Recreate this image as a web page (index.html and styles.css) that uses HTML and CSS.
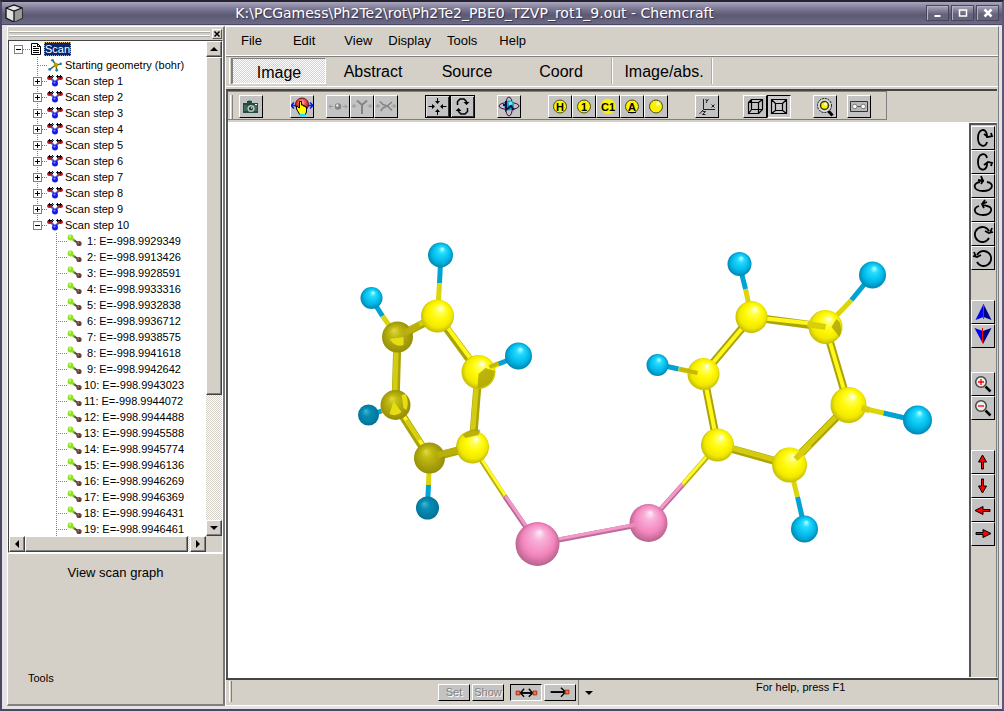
FILE: index.html
```html
<!DOCTYPE html>
<html lang="en">
<head>
<meta charset="utf-8">
<title>Chemcraft</title>
<link rel="stylesheet" href="styles.css">
</head>
<body>
<svg class="defs" aria-hidden="true">
  <defs>
    <radialGradient id="yellow" cx=".5" cy=".5" r=".55" fx=".62" fy=".24"><stop offset="0" stop-color="#fff"/><stop offset=".22" stop-color="#ffff50"/><stop offset=".5" stop-color="#fff800"/><stop offset=".75" stop-color="#f1e900"/><stop offset="1" stop-color="#b5ad05"/></radialGradient>
    <radialGradient id="olive" cx=".5" cy=".5" r=".55" fx=".38" fy=".28"><stop offset="0" stop-color="#dedb42"/><stop offset=".3" stop-color="#c1bb10"/><stop offset="1" stop-color="#918907"/></radialGradient>
    <radialGradient id="cyan" cx=".5" cy=".5" r=".55" fx=".58" fy=".24"><stop offset="0" stop-color="#c0ffff"/><stop offset=".25" stop-color="#22dcff"/><stop offset=".65" stop-color="#00b9e9"/><stop offset="1" stop-color="#007ba5"/></radialGradient>
    <radialGradient id="teal" cx=".5" cy=".5" r=".55" fx=".36" fy=".3"><stop offset="0" stop-color="#48b6d4"/><stop offset=".35" stop-color="#078eb6"/><stop offset="1" stop-color="#006f96"/></radialGradient>
    <radialGradient id="pink" cx=".5" cy=".5" r=".55" fx=".55" fy=".22"><stop offset="0" stop-color="#fff0f8"/><stop offset=".25" stop-color="#f7b2da"/><stop offset=".65" stop-color="#f486bd"/><stop offset="1" stop-color="#a95c82"/></radialGradient>
    <radialGradient id="redball" cx=".5" cy=".35" r=".65"><stop offset="0" stop-color="#ffb0b0"/><stop offset=".5" stop-color="#ec4040"/><stop offset="1" stop-color="#9a1010"/></radialGradient>
  </defs>
  <symbol id="i-cube" viewBox="0 0 18 18"><path d="M1 4 9 1l8 3v10l-8 4-8-4z" fill="#e4e2e2" stroke="#111" stroke-width="1.3"/><path d="m9 7 8-3v10l-8 4z" fill="#9a9a9a"/><path d="M1 4 9 7l8-3M9 7v11" fill="none" stroke="#111" stroke-width="1.3"/></symbol>
  <symbol id="i-page" viewBox="0 0 12 12"><path d="M1.500 .5h6l3 3v8h-9z" fill="#fff" stroke="#000"/><path d="M7.500 .5v3h3M3 5.500h6M3 7.500h6M3 9.500h6M3 3.500h3" fill="none" stroke="#000"/></symbol>
  <symbol id="i-geo" viewBox="0 0 16 16"><path d="M5 2l4 6 6-1M9 8l-7 5M9 8l1 6" fill="none" stroke="#60600c" stroke-width="1.600"/><circle cx="9" cy="8" r="2.500" fill="#b59b08"/><g fill="#1684c2"><circle cx="5" cy="2.500" r="1.500"/><circle cx="14.500" cy="6.500" r="1.500"/><circle cx="2" cy="13" r="1.700"/><circle cx="10" cy="14" r="1.600"/></g></symbol>
  <symbol id="i-step" viewBox="0 0 16 14"><path d="m3 3 5 6 5-6" fill="none" stroke="#5053c0" stroke-width="2"/><ellipse cx="2.500" cy="4" rx="2.500" ry="2" fill="#c00c10"/><ellipse cx="13.500" cy="4" rx="2.500" ry="2" fill="#c00c10"/><circle cx="8" cy="9.500" r="3" fill="#1717ee"/><circle cx="7.500" cy="8.500" r="1" fill="#8d90ff"/><path d="M1.500 2.500h4m4 0h5M3 1 1.500 2.500 3 4M5 1l1.500 1.500L5 4m6-3L9.500 2.500 11 4m2-3 1.500 1.500L13 4" fill="none" stroke="#000"/></symbol>
  <symbol id="i-bond" viewBox="0 0 16 14"><path d="m4 4 4 3" stroke="#76cc11" stroke-width="2.500"/><path d="m7.500 6.500 4 3" stroke="#664238" stroke-width="2"/><circle cx="3.500" cy="3.500" r="2.900" fill="#8fe31d"/><circle cx="3" cy="2.500" r="1" fill="#d6ff7e"/><circle cx="12" cy="9.500" r="2.600" fill="#684036"/><circle cx="11.300" cy="8.700" r=".8" fill="#ab8078"/></symbol>
  <symbol id="i-camera" viewBox="0 0 22 21"><path d="M3 7h4V5h5v2h6v10H3z" fill="#244b3d"/><path d="M4 9h3v6H4zm9 0h4v6h-4z" fill="#406a58"/><path d="M8 4.500h3" stroke="#789a90"/><circle cx="11" cy="12.500" r="3.600" fill="#b8c8c0"/><circle cx="11" cy="12.500" r="2" fill="#153024"/><circle cx="11.500" cy="12" r=".8" fill="#fff"/><path d="M15 8h2v1h-2z" fill="#fff"/></symbol>
  <symbol id="i-hand" viewBox="0 0 22 21"><circle cx="11" cy="8.500" r="6.500" fill="url(#redball)" stroke="#601414"/><path d="M0 9.500h5m12 0h5M3 6.500l-3 3 3 3m16-6 3 3-3 3" stroke="#0018f0" stroke-width="1.500" fill="none"/><path d="m5.500 10 3 2V5.500h2V9h1.700v1H14v1h1.500v5l-1.500 3H9l-3.500-6z" fill="#ff0" stroke="#000"/><path d="M8.500 18h6v2.500h-6z" fill="#19dfff"/></symbol>
  <symbol id="i-gray1" viewBox="0 0 22 21"><circle cx="11" cy="10.500" r="3.200" fill="#858585"/><circle cx="10.300" cy="9.500" r="1.200" fill="#eee"/><path d="M2 10.500h4m10 0h4M4 8.500l-2 2 2 2m14-4 2 2-2 2" stroke="#98988f" fill="none"/></symbol>
  <symbol id="i-gray2" viewBox="0 0 22 21"><path d="M6 4.500 11 9l5-4.500M11 9v9" stroke="#858585" stroke-width="2" fill="none"/><path d="M1.500 10h4m11 0h4M3.500 8l-2 2 2 2m15-4 2 2-2 2" stroke="#98988f" fill="none"/></symbol>
  <symbol id="i-gray3" viewBox="0 0 22 21"><path d="m5 5.500 3 3 5 2 4 4M17 6l-5 4-4 2-2.500 3" stroke="#858585" stroke-width="1.600" fill="none"/><path d="M1.500 10h4m11 0h4M3.500 8l-2 2 2 2m15-4 2 2-2 2" stroke="#98988f" fill="none"/></symbol>
  <symbol id="i-center" viewBox="0 0 22 21"><path d="M11 2v5m0 7v5M2 10.500h5m8 0h5" stroke="#000"/><path d="M8.500 5h5L11 8zM8.500 16h5L11 13zM5.500 8v5l3-2.500zM16.500 8v5l-3-2.500z"/></symbol>
  <symbol id="i-spin" viewBox="0 0 22 21"><path d="M6 9V5.500L8.500 3h4L15 5.500V7M16 12v3.500L13.500 18h-4L7 15.500V14" fill="none" stroke="#000" stroke-width="1.500"/><path d="M12 6h6l-3 3zM4 15h6l-3-3z"/></symbol>
  <symbol id="i-orbit" viewBox="0 0 22 21"><g fill="none" stroke="#3d0a42"><ellipse cx="11" cy="10" rx="10" ry="3.500"/><ellipse cx="11" cy="10.500" rx="3.500" ry="9.500"/></g><circle cx="11" cy="9.500" r="5" fill="#02a9c2"/><circle cx="12.500" cy="7.500" r="2" fill="#61efff"/><path d="M8 5v9l5-4 3 4M5 9h4" fill="none" stroke="#15104a" stroke-width="2"/></symbol>
  <symbol id="i-ball" viewBox="0 0 22 21"><circle cx="11" cy="10.500" r="6.500" fill="#fff200" stroke="#4b4b14"/></symbol>
  <symbol id="i-shine" viewBox="0 0 22 21"><circle cx="11" cy="10.500" r="6.500" fill="#fff200" stroke="#4b4b14"/><circle cx="13" cy="8" r="2" fill="#ffffbc"/></symbol>
  <symbol id="i-plain" viewBox="0 0 22 21"><circle cx="11" cy="10.500" r="7.500" fill="#fff200" stroke="#e1db78" stroke-dasharray="2 1"/></symbol>
  <symbol id="i-axes" viewBox="0 0 22 21"><path d="M7.500 3v10.500H19M7.500 13.500l-4 4.500M9.500 3l1.500 2 1.500-2M11 5l-1 2M15.500 8.500l3 3m0-3-3 3M6.500 15.500h3l-3 3h3" fill="none" stroke="#222"/></symbol>
  <symbol id="i-box" viewBox="0 0 22 21"><path d="M4.500 6.500h10v11h-10zM7.500 3.500h11v10h-11zM4.500 6.500l3-3m7 3 4-3m-4 14 4-4m-14 4 3-4" fill="none" stroke="#000" stroke-width="1.200"/></symbol>
  <symbol id="i-box2" viewBox="0 0 22 21"><path d="M3.500 3.500h15v14h-15zM7.500 7.500h7v7h-7zM3.500 3.500l4 4m11-4-4 4m4 10-4-3m-11 3 4-3" fill="none" stroke="#000" stroke-width="1.200"/></symbol>
  <symbol id="i-magball" viewBox="0 0 22 21"><path d="m13.500 14 5 5.500" stroke="#000" stroke-width="3"/><circle cx="10.500" cy="9.500" r="7" fill="#ddd" stroke="#000" stroke-dasharray="2 1"/><circle cx="10.500" cy="9.500" r="4" fill="#fff000" stroke="#3c3c00" stroke-width="1.500"/><circle cx="11.500" cy="8" r="1.400" fill="#fff"/></symbol>
  <symbol id="i-tape" viewBox="0 0 22 21"><path d="M2.500 5.500h17v10h-17z" fill="#b9b9b9" stroke="#333"/><path d="M8 10.500h6" stroke="#555"/><circle cx="6.800" cy="10.500" r="2.300" fill="#fff" stroke="#777"/><circle cx="15.200" cy="10.500" r="2.300" fill="#fff" stroke="#777"/></symbol>
  <symbol id="i-rx1" viewBox="0 0 22 22"><path d="M15 15c-1 6-9 5-9-4s8-11 9-3v3M12 7l4 3 4-1-1-3" fill="none" stroke="#000" stroke-width="1.800"/></symbol>
  <symbol id="i-rx2" viewBox="0 0 22 22"><path d="M15 7c-1-6-9-5-9 4s8 10 9 3v-3M12 14l4-3 4 1-1 3" fill="none" stroke="#000" stroke-width="1.800"/></symbol>
  <symbol id="i-ry1" viewBox="0 0 22 22"><path d="M8 7C0 8 1 16 11 16s12-8 4-9M6 5l6 1M9 1l2 5-2 3" fill="none" stroke="#000" stroke-width="1.800"/></symbol>
  <symbol id="i-ry2" viewBox="0 0 22 22"><path d="M7 7C0 9 2 16 11 16s11-8 4-9l-5-2M15 3l-5 2M13 1l-3 4 2 4" fill="none" stroke="#000" stroke-width="1.800"/></symbol>
  <symbol id="i-rz1" viewBox="0 0 22 22"><path d="M17 15a7.500 7.500 0 1 1 0-7M13 8l4 2 4-1M20 5l-2 5" fill="none" stroke="#000" stroke-width="1.800"/></symbol>
  <symbol id="i-rz2" viewBox="0 0 22 22"><path d="M5 15a7.500 7.500 0 1 0 0-7M9 8l-4 2-4-1M2 5l2 5" fill="none" stroke="#000" stroke-width="1.800"/></symbol>
  <symbol id="i-north" viewBox="0 0 22 22"><path d="m11.500 3-8 16 8-3z" fill="#0000f4"/><path d="m11.500 3 8 16-8-3z" fill="#00008c"/><path d="M11.500 3v15" stroke="#f00"/></symbol>
  <symbol id="i-south" viewBox="0 0 22 22"><path d="m2.500 3 8.500 3v13z" fill="#0000f4"/><path d="m19.500 3-8.500 3v13z" fill="#00008c"/><path d="M10.500 3v15" stroke="#f00"/></symbol>
  <symbol id="i-zin" viewBox="0 0 22 22"><path d="m11.500 11.500 2 2" stroke="#ee0" stroke-width="3"/><path d="m13.500 13.500 5 5" stroke="#000" stroke-width="2.500"/><circle cx="9" cy="9" r="5.300" fill="#eee" stroke="#444" stroke-width="1.500"/><path d="M6 9h6M9 6v6" stroke="red" stroke-width="1.300"/></symbol>
  <symbol id="i-zout" viewBox="0 0 22 22"><path d="m11.500 11.500 2 2" stroke="#ee0" stroke-width="3"/><path d="m13.500 13.500 5 5" stroke="#000" stroke-width="2.500"/><circle cx="9" cy="9" r="5.300" fill="#eee" stroke="#444" stroke-width="1.500"/><path d="M6 9h6" stroke="red" stroke-width="1.300"/></symbol>
  <symbol id="i-up" viewBox="0 0 22 22"><path d="m10.500 4 4 7h-3v7h-2v-7h-3z" fill="red" stroke="#000"/></symbol>
  <symbol id="i-down" viewBox="0 0 22 22"><path d="m10.500 18 4-7h-3V4h-2v7h-3z" fill="red" stroke="#000"/></symbol>
  <symbol id="i-left" viewBox="0 0 22 22"><path d="m3 11.500 8-4v3h7v2h-7v3z" fill="red" stroke="#000"/></symbol>
  <symbol id="i-right" viewBox="0 0 22 22"><path d="m19 10.500-8-4v3H4v2h7v3z" fill="red" stroke="#000"/></symbol>
  <symbol id="i-both" viewBox="0 0 30 16"><path d="M8 8.500h14" stroke="#000" stroke-width="2"/><path d="m13 4-4 4.500 4 4M18 4l4 4.500-4 4" fill="none" stroke="#000" stroke-width="1.500"/><path d="M4.500 6.500h4v4h-4zM22.500 6.500h4v4h-4z" fill="#ff7040" stroke="#a22c0b"/></symbol>
  <symbol id="i-next" viewBox="0 0 30 16"><path d="M5 7.500h15" stroke="#000" stroke-width="2"/><path d="m16 3 5 4.500-5 5" fill="none" stroke="#000" stroke-width="1.500"/><path d="M20.500 5.500h4v4h-4z" fill="#ff7040" stroke="#a22c0b"/></symbol>
</svg>

<div class="window">
  <header class="titlebar">
    <svg class="app-icon"><use href="#i-cube"/></svg>
    <h1>K:\PCGamess\Ph2Te2\rot\Ph2Te2_PBE0_TZVP_rot1_9.out - Chemcraft</h1>
    <div class="window-buttons">
      <button aria-label="Minimize"><svg viewBox="0 0 20 14"><path d="M7 10h6" stroke="#fff" stroke-width="2"/></svg></button>
      <button aria-label="Maximize"><svg viewBox="0 0 20 14"><path d="M7 4h7v6H7z" fill="none" stroke="#fff" stroke-width="1.500"/></svg></button>
      <button aria-label="Close"><svg viewBox="0 0 20 14"><path d="m7 3.500 7 7m0-7-7 7" stroke="#fff" stroke-width="2.500"/></svg></button>
    </div>
  </header>

  <div class="body">
    <aside class="sidebar">
      <div class="dock"><span class="dock-grip"></span><button class="dock-close" aria-label="Close panel"><svg viewBox="0 0 8 8"><path d="m1.500 1.500 5 5m0-5-5 5" stroke="#000" stroke-width="1.500"/></svg></button></div>
      <div class="tree-box">
        <div class="tree">
          <div class="row root"><button class="toggle minus" aria-label="Collapse"></button><i class="dots"></i><svg class="page"><use href="#i-page"/></svg><span class="selected">Scan</span></div>
          <ul class="steps">
            <li class="row start"><svg><use href="#i-geo"/></svg><span>Starting geometry (bohr)</span></li>
            <li class="row"><button class="toggle plus" aria-label="Expand"></button><i class="dots"></i><svg><use href="#i-step"/></svg><span>Scan step 1</span></li>
            <li class="row"><button class="toggle plus" aria-label="Expand"></button><i class="dots"></i><svg><use href="#i-step"/></svg><span>Scan step 2</span></li>
            <li class="row"><button class="toggle plus" aria-label="Expand"></button><i class="dots"></i><svg><use href="#i-step"/></svg><span>Scan step 3</span></li>
            <li class="row"><button class="toggle plus" aria-label="Expand"></button><i class="dots"></i><svg><use href="#i-step"/></svg><span>Scan step 4</span></li>
            <li class="row"><button class="toggle plus" aria-label="Expand"></button><i class="dots"></i><svg><use href="#i-step"/></svg><span>Scan step 5</span></li>
            <li class="row"><button class="toggle plus" aria-label="Expand"></button><i class="dots"></i><svg><use href="#i-step"/></svg><span>Scan step 6</span></li>
            <li class="row"><button class="toggle plus" aria-label="Expand"></button><i class="dots"></i><svg><use href="#i-step"/></svg><span>Scan step 7</span></li>
            <li class="row"><button class="toggle plus" aria-label="Expand"></button><i class="dots"></i><svg><use href="#i-step"/></svg><span>Scan step 8</span></li>
            <li class="row"><button class="toggle plus" aria-label="Expand"></button><i class="dots"></i><svg><use href="#i-step"/></svg><span>Scan step 9</span></li>
            <li class="row"><button class="toggle minus" aria-label="Collapse"></button><i class="dots"></i><svg><use href="#i-step"/></svg><span>Scan step 10</span></li>
          </ul>
          <ul class="energies">
            <li class="row"><i class="dots"></i><svg><use href="#i-bond"/></svg><span>&nbsp;1: E=-998.9929349</span></li>
            <li class="row"><i class="dots"></i><svg><use href="#i-bond"/></svg><span>&nbsp;2: E=-998.9913426</span></li>
            <li class="row"><i class="dots"></i><svg><use href="#i-bond"/></svg><span>&nbsp;3: E=-998.9928591</span></li>
            <li class="row"><i class="dots"></i><svg><use href="#i-bond"/></svg><span>&nbsp;4: E=-998.9933316</span></li>
            <li class="row"><i class="dots"></i><svg><use href="#i-bond"/></svg><span>&nbsp;5: E=-998.9932838</span></li>
            <li class="row"><i class="dots"></i><svg><use href="#i-bond"/></svg><span>&nbsp;6: E=-998.9936712</span></li>
            <li class="row"><i class="dots"></i><svg><use href="#i-bond"/></svg><span>&nbsp;7: E=-998.9938575</span></li>
            <li class="row"><i class="dots"></i><svg><use href="#i-bond"/></svg><span>&nbsp;8: E=-998.9941618</span></li>
            <li class="row"><i class="dots"></i><svg><use href="#i-bond"/></svg><span>&nbsp;9: E=-998.9942642</span></li>
            <li class="row"><i class="dots"></i><svg><use href="#i-bond"/></svg><span>10: E=-998.9943023</span></li>
            <li class="row"><i class="dots"></i><svg><use href="#i-bond"/></svg><span>11: E=-998.9944072</span></li>
            <li class="row"><i class="dots"></i><svg><use href="#i-bond"/></svg><span>12: E=-998.9944488</span></li>
            <li class="row"><i class="dots"></i><svg><use href="#i-bond"/></svg><span>13: E=-998.9945588</span></li>
            <li class="row"><i class="dots"></i><svg><use href="#i-bond"/></svg><span>14: E=-998.9945774</span></li>
            <li class="row"><i class="dots"></i><svg><use href="#i-bond"/></svg><span>15: E=-998.9946136</span></li>
            <li class="row"><i class="dots"></i><svg><use href="#i-bond"/></svg><span>16: E=-998.9946269</span></li>
            <li class="row"><i class="dots"></i><svg><use href="#i-bond"/></svg><span>17: E=-998.9946369</span></li>
            <li class="row"><i class="dots"></i><svg><use href="#i-bond"/></svg><span>18: E=-998.9946431</span></li>
            <li class="row"><i class="dots"></i><svg><use href="#i-bond"/></svg><span>19: E=-998.9946461</span></li>
          </ul>
        </div>
        <div class="vscroll">
          <button class="scroll-btn" aria-label="Scroll up"><svg viewBox="0 0 14 14"><path d="m7 5 4 4H3z"/></svg></button>
          <div class="track"><div class="thumb"></div></div>
          <button class="scroll-btn" aria-label="Scroll down"><svg viewBox="0 0 14 14"><path d="m7 9 4-4H3z"/></svg></button>
        </div>
        <div class="hscroll">
          <button class="scroll-btn" aria-label="Scroll left"><svg viewBox="0 0 14 14"><path d="m5 7 4-4v8z"/></svg></button>
          <div class="track"><div class="thumb"></div></div>
          <button class="scroll-btn" aria-label="Scroll right"><svg viewBox="0 0 14 14"><path d="M9 7 5 3v8z"/></svg></button>
        </div>
      </div>
      <div class="side-panel">
        <button class="scan-graph">View scan graph</button>
        <button class="side-tools">Tools</button>
      </div>
    </aside>

    <main class="main">
      <nav class="menu">
        <button>File</button><button>Edit</button><button>View</button><button>Display</button><button>Tools</button><button>Help</button>
      </nav>
      <div class="tabs">
        <span class="grip"></span>
        <button class="active">Image</button><button>Abstract</button><button>Source</button><button>Coord</button><button class="last">Image/abs.</button>
      </div>
      <div class="view">
        <div class="tool-strip">
          <div class="toolbar">
            <span class="grip"></span>
            <button class="tool" aria-label="Snapshot"><svg><use href="#i-camera"/></svg></button>
            <button class="tool gap-l" aria-label="Drag"><svg><use href="#i-hand"/></svg></button>
            <button class="tool gap-s" aria-label="Move atom" disabled><svg><use href="#i-gray1"/></svg></button>
            <button class="tool" aria-label="Move fragment" disabled><svg><use href="#i-gray2"/></svg></button>
            <button class="tool" aria-label="Rotate fragment" disabled><svg><use href="#i-gray3"/></svg></button>
            <button class="tool framed gap-l" aria-label="Center"><svg><use href="#i-center"/></svg></button>
            <button class="tool framed" aria-label="Rotate"><svg><use href="#i-spin"/></svg></button>
            <button class="tool gap-m" aria-label="Orbit"><svg><use href="#i-orbit"/></svg></button>
            <button class="tool letter gap-l"><svg><use href="#i-ball"/></svg><span>H</span></button>
            <button class="tool letter"><svg><use href="#i-ball"/></svg><span>1</span></button>
            <button class="tool letter"><svg><use href="#i-plain"/></svg><span>C1</span></button>
            <button class="tool letter"><svg><use href="#i-ball"/></svg><span class="under">A</span></button>
            <button class="tool" aria-label="Atoms"><svg><use href="#i-shine"/></svg></button>
            <button class="tool gap-l" aria-label="Axes"><svg><use href="#i-axes"/></svg></button>
            <button class="tool gap-n" aria-label="Parallel view"><svg><use href="#i-box"/></svg></button>
            <button class="tool pressed" aria-label="Perspective view"><svg><use href="#i-box2"/></svg></button>
            <button class="tool gap-m" aria-label="Inspect atom"><svg><use href="#i-magball"/></svg></button>
            <button class="tool gap-xs" aria-label="Animation"><svg><use href="#i-tape"/></svg></button>
          </div>
        </div>
        <div class="stage">
          <svg class="molecule" viewBox="227 122 740 556" role="img" aria-label="Diphenyl ditelluride molecule">
            <g fill="none" stroke="#aaa408" stroke-width="8"><path d="M436 316 477 372 471 447M396 337 394 405 428 458M750 317 702 374 716 445M824 327 847 405M436 316 396 337M471 447 428 458M750 317 824 327M847 405 788 465 716 445"/></g>
            <g fill="none" stroke="#fff71a" stroke-width="4"><path d="M437 315 478 371M471 447 428 457M395 405 429 457M824 327 847 405M716 445 702 374 750 317 824 325"/></g>
            <g fill="none" stroke="#d4cc0c" stroke-width="5"><path d="M476 372 470 447M395 337 393 405M436 315 396 336M847 404 788 464 716 444"/></g>
            <g fill="none" stroke-width="5">
              <path d="M436 316 438 283M396 337 381 316M477 372 497 364M394 405 380 411M428 458 427 485M750 317 744 289M824 327 850 300M702 374 677 369M847 405 882 413M788 465 796 497" stroke="#ddd50c"/>
              <path d="m438 283 1-20M381 316l-9-14M497 364l15-6M380 411l-9 3M427 485l-1 20M744 289l-5-20M850 300l18-22M677 369l-18-4M882 413l30 7M796 497l6 26" stroke="#00a3d1"/>
              <path d="m471 447 32 49M716 445l-35 40" stroke="#b7ae0c"/><path d="m472 447 32 49M716 444l-35 40" stroke="#fff928" stroke-width="3"/>
              <path d="m503 496 33 48M681 485l-34 38M536 544l111-21" stroke="#b96c99"/><path d="m504 496 33 48M681 484l-34 38M536 543l111-21" stroke="#f598c9" stroke-width="3"/>
            </g>
            <g fill="url(#yellow)"><circle cx="436" cy="316" r="16.500"/><circle cx="477" cy="372" r="17"/><circle cx="471" cy="447" r="16.500"/><circle cx="750" cy="317" r="16"/><circle cx="824" cy="327" r="17"/><circle cx="702" cy="374" r="16"/><circle cx="847" cy="405" r="18"/><circle cx="716" cy="445" r="16.500"/><circle cx="788" cy="465" r="17.500"/></g>
            <g fill="url(#olive)"><circle cx="396" cy="337" r="15.500"/><circle cx="394" cy="405" r="15"/><circle cx="428" cy="458" r="15.500"/></g>
            <g fill="#e6dd12"><path d="M388 339l14-2v8q-8 3-14-6M388 414l4-13 8 11q-5 5-12 2M400 395l4-1q4 8 1 16l-3-2z"/></g>
            <g fill="#a59c09"><path d="M476 388q16-2 17-17l-9-3-7 6zM461 435q9-8 18-5l-2 5-13 3zM838 337q3-7 0-15l-3-3-5 8z" opacity=".75"/></g>
            <g fill="none" stroke-width="6"><path d="m403 333 15-8M436 455l20-5" stroke="#b9b00b"/><path d="m488 367 9-4M678 369l18 4" stroke="#c2b90b" stroke-width="4"/><path d="m806 324 18 3M794 459l14-14M860 408l8 2" stroke="#d7ce0c"/><path d="m405 420 13 20" stroke="#d8d00c" stroke-width="4"/></g>
            <g fill="url(#cyan)"><circle cx="439" cy="255" r="12.500"/><circle cx="370" cy="298" r="11"/><circle cx="517" cy="356" r="13.500"/><circle cx="738" cy="264" r="12"/><circle cx="871" cy="275" r="13.500"/><circle cx="656" cy="365" r="11"/><circle cx="916" cy="420" r="14.500"/><circle cx="803" cy="529" r="13.500"/></g>
            <g fill="url(#teal)"><circle cx="367" cy="415" r="10.500"/><circle cx="426" cy="508" r="11.500"/></g>
            <g fill="url(#pink)"><circle cx="536" cy="544" r="22"/><circle cx="647" cy="523" r="19"/></g>
            <path d="m628 526 8-2" stroke="#e98abd" stroke-width="4"/>
          </svg>
          <div class="rotate-bar">
            <button class="tool" aria-label="Rotate X clockwise"><svg><use href="#i-rx1"/></svg></button>
            <button class="tool" aria-label="Rotate X counterclockwise"><svg><use href="#i-rx2"/></svg></button>
            <button class="tool" aria-label="Rotate Y clockwise"><svg><use href="#i-ry1"/></svg></button>
            <button class="tool" aria-label="Rotate Y counterclockwise"><svg><use href="#i-ry2"/></svg></button>
            <button class="tool" aria-label="Rotate Z clockwise"><svg><use href="#i-rz1"/></svg></button>
            <button class="tool" aria-label="Rotate Z counterclockwise"><svg><use href="#i-rz2"/></svg></button>
            <button class="tool drop-l" aria-label="Nearer"><svg><use href="#i-north"/></svg></button>
            <button class="tool" aria-label="Farther"><svg><use href="#i-south"/></svg></button>
            <button class="tool drop-m" aria-label="Zoom in"><svg><use href="#i-zin"/></svg></button>
            <button class="tool" aria-label="Zoom out"><svg><use href="#i-zout"/></svg></button>
            <button class="tool drop-l" aria-label="Move up"><svg><use href="#i-up"/></svg></button>
            <button class="tool" aria-label="Move down"><svg><use href="#i-down"/></svg></button>
            <button class="tool" aria-label="Move left"><svg><use href="#i-left"/></svg></button>
            <button class="tool" aria-label="Move right"><svg><use href="#i-right"/></svg></button>
          </div>
        </div>
      </div>
      <footer class="status">
        <span class="grip"></span>
        <div class="status-tools">
          <button class="small" disabled>Set</button>
          <button class="small" disabled>Show</button>
          <button class="small arrow on" aria-label="Both directions"><svg><use href="#i-both"/></svg></button>
          <button class="small arrow" aria-label="Forward"><svg><use href="#i-next"/></svg></button>
        </div>
        <button class="more" aria-label="More"><svg viewBox="0 0 8 4"><path d="M0 0h8L4 4z"/></svg></button>
        <p>For help, press F1</p>
      </footer>
    </main>
  </div>
</div>
</body>
</html>
```

FILE: styles.css
```css
* { box-sizing: border-box; }
body { margin: 0; font-family: "Liberation Sans", Arial, sans-serif; font-size: 11px; color: #000; }
button { margin: 0; padding: 0; border: 0; background: none; font: inherit; color: inherit; }
ul { list-style: none; margin: 0; padding: 0; }
svg { display: block; }
.defs { position: absolute; width: 0; height: 0; }

.window { display: flex; flex-direction: column; height: 100vh; background: #e5e2e5; border: 2px solid #4b4866; border-top: 2px solid #25232f; border-right-color: #5a577c; }
.titlebar { display: flex; align-items: center; flex: none; height: 23px; padding: 0 3px; background: linear-gradient(#a9a5bc, #77738e 35%, #5c5975 60%, #6e6a86); border-bottom: 1px solid #4b4866; }
.app-icon { width: 18px; height: 18px; }
.titlebar h1 { flex: 1; margin: 0; text-align: center; font: 14px/20px "DejaVu Sans", sans-serif; color: #fff; text-shadow: 1px 1px 1px #333048; white-space: nowrap; overflow: hidden; }
.window-buttons { display: flex; gap: 2px; }
.window-buttons button { width: 23px; height: 16px; border: 1px solid #4a465e; background: linear-gradient(#aaa7ba, #65627c 60%); box-shadow: inset 1px 1px #b5b2c3; }
.window-buttons svg { width: 21px; height: 14px; }

.body { display: flex; flex: 1; min-height: 0; padding: 1px 3px 3px 5px; }
.sidebar { display: flex; flex-direction: column; flex: none; width: 218px; background: #d4d0c8; border: 1px solid #fff; border-right: 2px solid #777; border-bottom: 2px solid #808080; }
.dock { display: flex; align-items: center; gap: 2px; height: 13px; padding: 0 1px; }
.dock-grip { flex: 1; height: 6px; border-top: 2px ridge #fff; border-bottom: 2px ridge #fff; }
.dock-close { width: 10px; height: 10px; border: 1px solid; border-color: #fff #555 #555 #fff; }
.dock-close svg { width: 8px; height: 8px; }
.tree-box { flex: 1; min-height: 0; display: grid; grid-template-columns: 1fr 16px; grid-template-rows: 1fr 16px; border: 1px solid #444; border-right-color: #fff; border-bottom-color: #fff; }
.tree { background: #fff; overflow: hidden; min-height: 0; }
.row { display: flex; align-items: center; height: 16px; line-height: 16px; white-space: nowrap; }
.row svg { width: 16px; height: 14px; flex: none; margin-right: 2px; }
.row .page { width: 12px; height: 12px; }
.root { padding-left: 5px; }
.root .dots { width: 7px; }
.selected { background: #0a246a; color: #fff; outline: 1px dotted #d6b060; outline-offset: -1px; padding: 0 1px; height: 14px; line-height: 15px; }
.toggle { width: 9px; height: 9px; flex: none; border: 1px solid #808080; background: linear-gradient(#000, #000) center / 5px 1px no-repeat #fff; }
.plus { background: linear-gradient(#000, #000) center / 5px 1px no-repeat, linear-gradient(#000, #000) center / 1px 5px no-repeat #fff; }
.dots { width: 5px; height: 1px; flex: none; background: repeating-linear-gradient(90deg, #808080 0 1px, #fff 1px 2px); }
.steps { padding-left: 24px; background: repeating-linear-gradient(#808080 0 1px, #fff 1px 2px) 28px 0 / 1px 170px no-repeat; }
.start { padding-left: 14px; background: repeating-linear-gradient(90deg, #808080 0 1px, #fff 1px 2px) 5px 8px / 10px 1px no-repeat; }
.energies { padding-left: 47px; background: repeating-linear-gradient(#808080 0 1px, #fff 1px 2px) 47px 0 / 1px 100% no-repeat; }
.energies .dots { width: 11px; }
.energies svg { margin-right: 1px; }
.vscroll { display: flex; flex-direction: column; }
.hscroll { display: flex; grid-column: 1; }
.track { flex: 1; background: repeating-conic-gradient(#d4d0c8 0 25%, #fff 0 50%) 0 0 / 2px 2px; }
.thumb { background: #d4d0c8; border: 1px solid; border-color: #fff #404040 #404040 #fff; box-shadow: inset -1px -1px #808080; }
.vscroll .thumb { height: 73%; }
.hscroll .thumb { height: 16px; width: 99%; }
.scroll-btn { width: 16px; height: 16px; flex: none; background: #d4d0c8; border: 1px solid; border-color: #fff #404040 #404040 #fff; box-shadow: inset -1px -1px #808080; }
.scroll-btn svg { width: 14px; height: 14px; }
.side-panel { flex: none; display: flex; flex-direction: column; justify-content: space-between; height: 151px; padding: 11px 20px 18px; border-top: 1px solid #fff; }
.scan-graph { font-size: 13px; line-height: 16px; }
.side-tools { align-self: flex-start; line-height: 16px; }

.main { flex: 1; min-width: 0; display: flex; flex-direction: column; background: #d4d0c8; border: 1px solid #fff; border-right: 1px solid #808080; }
.menu { display: flex; flex: none; height: 29px; padding: 0 0 2px 5px; font-size: 13px; border-bottom: 1px solid #fff; }
.menu button { padding: 0 8px; }
.menu button:nth-child(-n+2) { padding: 0 16px 0 10px; margin-right: 5px; }
.menu button:nth-child(5) { margin-right: 6px; }
.grip { flex: none; width: 3px; margin-right: 6px; border-left: 1px solid #fff; border-right: 1px solid #808080; }
.tabs { display: flex; flex: none; height: 31px; padding: 1px 0 2px 3px; font-size: 16px; border-top: 1px solid #808080; border-bottom: 1px solid #fff; }
.tabs .grip { margin-right: 0; }
.tabs button { width: 94px; line-height: 28px; }
.tabs .active { border: 1px solid; border-color: #808080 #fff #fff #808080; background: repeating-conic-gradient(#d4d0c8 0 25%, #fff 0 50%) 0 0 / 2px 2px; }
.tabs .last { width: 102px; margin-left: 3px; border-left: 2px groove #fff; border-right: 2px groove #fff; padding-left: 4px; }
.view { flex: 1; min-height: 0; display: flex; flex-direction: column; margin: 2px 1px 0 0; border-left: 2px solid #555; border-top: 2px solid #444; }
.tool-strip { display: flex; flex: none; height: 31px; }
.toolbar { display: flex; align-items: center; height: 29px; padding: 2px 15px 0 2px; border-top: 1px solid #808080; border-right: 1px solid #808080; border-bottom: 1px solid #808080; }
.toolbar .grip { height: 24px; }
.tool { flex: none; width: 24px; height: 23px; background: #c3c3c3; border: 1px solid; border-color: #fff #000 #000 #fff; }
.tool svg { width: 22px; height: 21px; }
.gap-xs { margin-left: 10px; }
.gap-s { margin-left: 12px; }
.gap-m { margin-left: 22px; }
.gap-n { margin-left: 24px; }
.gap-l { margin-left: 27px; }
.framed { width: 25px; border-color: #000; box-shadow: inset 1px 1px #ddd, inset -1px -1px #333; }
.framed svg { width: 23px; }
.pressed { border-color: #000 #fff #fff #000; background: #c9c7ca; }
.letter { display: grid; }
.letter svg, .letter span { grid-area: 1 / 1; }
.letter span { place-self: center; font-weight: bold; font-size: 11px; line-height: 12px; }
.letter .under { text-decoration: underline; }
.stage { flex: 1; min-height: 0; display: flex; background: #fff; }
.molecule { flex: 1; min-width: 0; height: 100%; }
.rotate-bar { flex: none; width: 28px; margin: 1px 0; padding: 1px 1px 0 0; background: #d4d0c8; border-left: 2px solid #555; border-top: 2px solid #555; border-right: 1px solid #808080; }
.rotate-bar .tool { display: block; height: 24px; }
.rotate-bar svg { height: 22px; }
.rotate-bar .drop-l { margin-top: 30px; }
.rotate-bar .drop-m { margin-top: 24px; }
.status { display: flex; flex: none; height: 27px; padding-left: 3px; border-top: 2px solid #444; }
.status .grip { margin: 1px 0 3px; }
.status-tools { display: flex; align-items: center; gap: 2px; margin-left: 206px; padding-right: 2px; border-right: 1px solid #808080; }
.small { width: 32px; height: 17px; background: #c3c3c3; border: 1px solid; border-color: #fff #000 #000 #fff; line-height: 15px; color: #808080; text-shadow: 1px 1px #fff; }
.arrow svg { width: 30px; height: 15px; }
.on { margin-left: 4px; border-color: #000 #fff #fff #000; }
.more { width: 8px; margin: 0 163px 0 6px; }
.more svg { width: 8px; height: 4px; }
.status p { margin: 0; line-height: 15px; white-space: nowrap; }
```
